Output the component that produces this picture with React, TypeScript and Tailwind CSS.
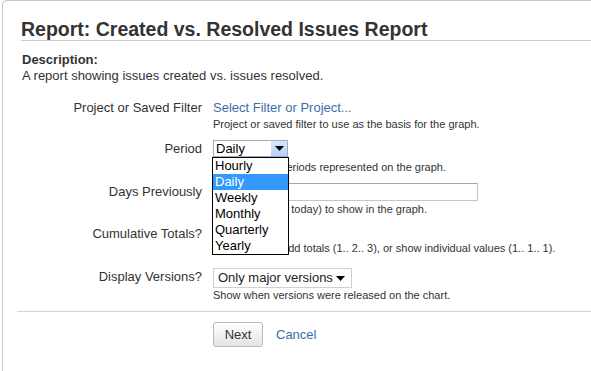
import React from "react";

const label = "w-[181px] shrink-0 text-right text-[13px] text-[#333]";
const hint = "text-[11px] leading-[14px] text-[#333] whitespace-nowrap";

function Arrow({ className = "" }: { className?: string }) {
  return (
    <svg width="9" height="5" viewBox="0 0 9 5" className={className}>
      <path d="M0 0 H9 L4.5 5 Z" fill="#000" />
    </svg>
  );
}

export default function App() {
  const options = ["Hourly", "Daily", "Weekly", "Monthly", "Quarterly", "Yearly"];
  return (
    <div className="relative w-[591px] h-[371px] overflow-hidden bg-white font-['Liberation_Sans',Arial,sans-serif] text-[#333]">
      <div className="ml-[2px] w-[640px] h-[400px] border-l border-t border-[#c8c8c8] rounded-tl-[5px] pl-[18px] pt-[17px]">
        <h1 className="text-[19.5px] leading-[22px] font-bold text-[#333] border-b border-[#ccc]">
          Report: Created vs. Resolved Issues Report
        </h1>

        <div className="mt-[11px] pl-[1px] text-[13px] leading-[16px]">
          <div className="font-bold">Description:</div>
          <div>A report showing issues created vs. issues resolved.</div>
        </div>

        {/* Project or Saved Filter */}
        <div className="flex gap-[11px] mt-[16px]">
          <div className={`${label} leading-[16px]`}>Project or Saved Filter</div>
          <div className="flex flex-col">
            <a className="text-[13px] leading-[16px] text-[#3b6fa6]">Select Filter or Project...</a>
            <div className={`${hint} mt-[1px]`}>Project or saved filter to use as the basis for the graph.</div>
          </div>
        </div>

        {/* Period */}
        <div className="flex gap-[11px] mt-[9px]">
          <div className={`${label} leading-[17px]`}>Period</div>
          <div className="flex flex-col">
            <div className="flex h-[17px] w-[75px] border border-[#a5acb2] bg-white">
              <div className="flex-1 text-[13px] leading-[15px] pl-[2px] text-black">Daily</div>
              <div className="w-[17px] h-full flex items-center justify-center bg-[linear-gradient(#d8e6fd,#b9d0f7)] border-l border-[#fff]">
                <Arrow />
              </div>
            </div>
            <div className={`${hint} mt-[3px]`}>Length of the periods represented on the graph.</div>
          </div>
        </div>

        {/* Days Previously */}
        <div className="flex gap-[11px] mt-[9px]">
          <div className={`${label} leading-[18px]`}>Days Previously</div>
          <div className="flex flex-col">
            <div className="h-[18px] w-[265px] border border-[#c6c6c6] border-t-[#a8a8a8] bg-white" />
            <div className={`${hint} mt-[1px]`}>Days (including today) to show in the graph.</div>
          </div>
        </div>

        {/* Cumulative Totals */}
        <div className="flex gap-[11px] mt-[11px]">
          <div className={`${label} leading-[14px]`}>Cumulative Totals?</div>
          <div className="flex flex-col">
            <div className="h-[14px]" />
            <div className={hint}>Progressively add totals (1.. 2.. 3), or show individual values (1.. 1.. 1).</div>
          </div>
        </div>

        {/* Display Versions */}
        <div className="flex gap-[11px] mt-[13px]">
          <div className={`${label} leading-[18px]`}>Display Versions?</div>
          <div className="flex flex-col">
            <div className="flex items-center h-[20px] w-[139px] border border-[#d0d0d0] bg-white pl-[4px] pr-[6px]">
              <span className="text-[13px] leading-[18px] text-[#222]">Only major versions</span>
              <Arrow className="ml-auto" />
            </div>
            <div className={`${hint} leading-[13px]`}>Show when versions were released on the chart.</div>
          </div>
        </div>

        <div className="-ml-[4px] mt-[9px] border-t border-[#d4d4d4]" />

        <div className="flex items-center gap-[13px] pl-[192px] mt-[10px]">
          <button className="w-[50px] h-[25px] rounded-[3px] border border-[#bbb] bg-[linear-gradient(#ffffff,#e4e4e4)] text-[13px] text-[#333]">
            Next
          </button>
          <a className="text-[13px] text-[#3b6fa6]">Cancel</a>
        </div>
      </div>

      {/* open dropdown list */}
      <div className="absolute left-[212px] top-[157px] w-[77px] border border-black bg-white">
        {options.map((o) => (
          <div
            key={o}
            className={`h-[16px] pl-[2px] text-[13px] leading-[16px] ${
              o === "Daily" ? "bg-[#3399ff] text-white" : "text-black"
            }`}
          >
            {o}
          </div>
        ))}
      </div>
    </div>
  );
}
